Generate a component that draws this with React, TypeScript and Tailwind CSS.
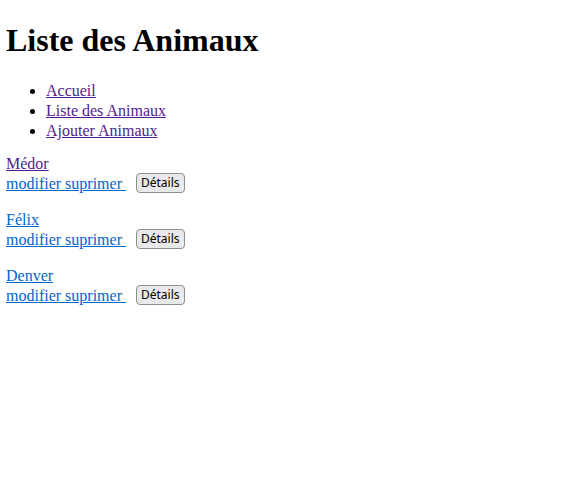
import React from "react";

const animals = [
  { name: "Médor", visited: true },
  { name: "Félix", visited: false },
  { name: "Denver", visited: false },
];

export default function App() {
  return (
    <div
      className="min-h-[486px] bg-white px-[6px] pt-px text-[16px] leading-[20px] text-black"
      style={{ fontFamily: '"Liberation Serif", "Times New Roman", serif' }}
    >
      <h1 className="my-[21.44px] text-[32px] font-bold leading-[normal]">Liste des Animaux</h1>
      <ul className="mt-4 mb-[13px] list-disc pl-10">
        <li>
          <a href="#" className="text-[#551a8b] underline">Accueil</a>
        </li>
        <li>
          <a href="#" className="text-[#551a8b] underline">Liste des Animaux</a>
        </li>
        <li>
          <a href="#" className="text-[#551a8b] underline">Ajouter Animaux</a>
        </li>
      </ul>
      {animals.map((a) => (
        <div key={a.name} className="mb-4">
          <div className="h-5">
            <a
              href="#"
              className={a.visited ? "text-[#551a8b] underline" : "text-[#0066cc] underline"}
            >
              {a.name}
            </a>
          </div>
          <div className="flex h-5 items-start">
            <a href="#" className="text-[#0066cc] underline">
              modifier suprimer&nbsp;
            </a>
            <button
              className="-mt-px ml-[10px] h-5 rounded-[4px] border border-[#8f8f8f] bg-[#e9e9ed] px-[4px] text-[12px] leading-[normal] text-black"
              style={{ fontFamily: '"Noto Sans", "Liberation Sans", Arial, sans-serif' }}
            >
              Détails
            </button>
          </div>
        </div>
      ))}
    </div>
  );
}
